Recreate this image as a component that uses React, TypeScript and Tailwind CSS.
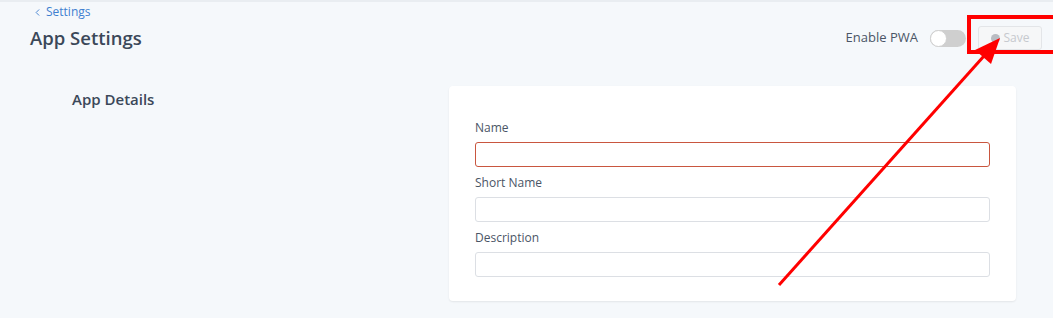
import React, { useState } from 'react';
import { ChevronLeft } from 'lucide-react';

function Field({ label, invalid }: { label: string; invalid?: boolean }) {
  return (
    <div className="flex flex-col">
      <label className="text-[12px] leading-[16px] text-[#4a5566] mb-[6px]">{label}</label>
      <input
        className={
          'h-[25px] w-full rounded-[3px] bg-white border outline-none ' +
          (invalid ? 'border-[#c9563f]' : 'border-[#dcdfe4]')
        }
      />
    </div>
  );
}

export default function App() {
  const [pwa, setPwa] = useState(false);

  return (
    <div
      className="relative w-full h-[318px] overflow-hidden bg-[#f5f8fb] border-t-[2px] border-[#e9edf1]"
      style={{ fontFamily: '"Open Sans", "Noto Sans", sans-serif' }}
    >
      {/* header */}
      <div className="pl-[30px] pr-[11px]">
        <a className="flex items-center gap-[3px] pl-[2px] pt-[2px] text-[12px] leading-[16px] text-[#3f7fd0]">
          <ChevronLeft className="w-[11px] h-[11px]" strokeWidth={2} />
          Settings
        </a>
        <div className="flex items-center justify-between mt-[3px]">
          <h1 className="text-[18.5px] leading-[30px] font-semibold text-[#3b4859]">App Settings</h1>
          <div className="flex items-center">
            <span className="text-[13px] font-medium text-[#4a5566] mr-[12px]">Enable PWA</span>
            <button
              onClick={() => setPwa(!pwa)}
              className="relative w-[36px] h-[17px] rounded-full bg-[#cfcfcf] mr-[12px]"
            >
              <span className="absolute left-0 top-0 w-[17px] h-[17px] rounded-full bg-white border border-[#d0d0d0]" />
            </button>
            <button
              disabled
              className="flex items-center justify-center gap-[4px] w-[64px] h-[24px] rounded-[3px] border border-[#e3e5e8] bg-[#f6f7f8] text-[12px] text-[#c6c9ce]"
            >
              <span className="w-[9px] h-[9px] rounded-full bg-[#b9bcc2]" />
              Save
            </button>
          </div>
        </div>
      </div>

      {/* content */}
      <div className="flex mt-[33px]">
        <div className="w-[449px] pl-[72px] pt-[3px] shrink-0">
          <h2 className="text-[15px] leading-[20px] font-semibold text-[#3b4859]">App Details</h2>
        </div>
        <div className="w-[567px] h-[215px] bg-white rounded-[4px] shadow-[0_1px_2px_rgba(0,0,0,0.08)] px-[26px] pt-[34px] flex flex-col gap-[8px]">
          <Field label="Name" invalid />
          <Field label="Short Name" />
          <Field label="Description" />
        </div>
      </div>

      {/* annotation */}
      <div className="absolute left-[967px] top-[13px] w-[90px] h-[39px] border-[4px] border-[#ff0000] pointer-events-none" />
      <svg className="absolute inset-0 pointer-events-none" width="1053" height="318">
        <line x1="779" y1="283" x2="984" y2="54" stroke="#ff0000" strokeWidth="3" />
        <polygon points="1000,36 991,62 975,48" fill="#ff0000" />
      </svg>
    </div>
  );
}
